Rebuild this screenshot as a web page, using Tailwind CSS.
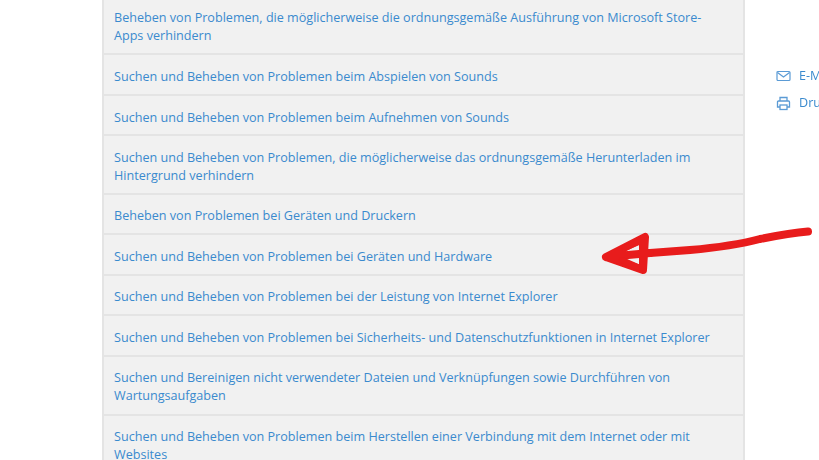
<!DOCTYPE html>
<html lang="de">
<head>
<meta charset="utf-8">
<title>Problembehandlung</title>
<script src="https://cdn.jsdelivr.net/npm/@tailwindcss/browser@4"></script>
</head>
<body class="bg-white overflow-hidden font-['Open_Sans','Noto_Sans',sans-serif]">
<div class="relative w-[819px] h-[460px] overflow-hidden blur-[0.4px]">
  <div class="flex items-start pl-[102px]">
    <!-- Liste -->
    <ul class="w-[643px] -mt-[5px] shrink-0 bg-[#f1f1f1] border-x-2 border-[#e4e4e4] text-[12.6px] leading-[18px] text-[#3a8ace]">
      <li class="h-[60px] pt-[14px] pl-[10px] pr-[30px] border-b-2 border-[#e4e4e4]">Beheben von Problemen, die möglicherweise die ordnungsgemäße Ausführung von Microsoft Store-Apps verhindern</li>
      <li class="h-[41px] pt-[13px] pl-[10px] pr-6 border-b-2 border-[#e4e4e4]">Suchen und Beheben von Problemen beim Abspielen von Sounds</li>
      <li class="h-[40px] pt-[13px] pl-[10px] pr-6 border-b-2 border-[#e4e4e4]">Suchen und Beheben von Problemen beim Aufnehmen von Sounds</li>
      <li class="h-[59px] pt-[13px] pl-[10px] pr-6 border-b-2 border-[#e4e4e4]">Suchen und Beheben von Problemen, die möglicherweise das ordnungsgemäße Herunterladen im Hintergrund verhindern</li>
      <li class="h-[40px] pt-[12px] pl-[10px] pr-6 border-b-2 border-[#e4e4e4]">Beheben von Problemen bei Geräten und Druckern</li>
      <li class="h-[41px] pt-[13px] pl-[10px] pr-6 border-b-2 border-[#e4e4e4]">Suchen und Beheben von Problemen bei Geräten und Hardware</li>
      <li class="h-[40px] pt-[12px] pl-[10px] pr-6 border-b-2 border-[#e4e4e4]">Suchen und Beheben von Problemen bei der Leistung von Internet Explorer</li>
      <li class="h-[41px] pt-[13px] pl-[10px] pr-6 border-b-2 border-[#e4e4e4]">Suchen und Beheben von Problemen bei Sicherheits- und Datenschutzfunktionen in Internet Explorer</li>
      <li class="h-[59px] pt-[12px] pl-[10px] pr-6 border-b-2 border-[#e4e4e4]">Suchen und Bereinigen nicht verwendeter Dateien und Verknüpfungen sowie Durchführen von Wartungsaufgaben</li>
      <li class="h-[59px] pt-[12px] pl-[10px] pr-6">Suchen und Beheben von Problemen beim Herstellen einer Verbindung mit dem Internet oder mit Websites</li>
    </ul>
    <!-- Teilen -->
    <div class="ml-[31px] pt-[67px] shrink-0 flex flex-col gap-[9px] text-[12.6px] leading-[18px] text-[#3a8ace] whitespace-nowrap">
      <div class="flex items-center gap-[8px]">
        <svg width="15" height="12" viewBox="0 0 15 12" fill="none" stroke="#5b9bd5" stroke-width="1.2"><rect x="1" y="1.5" width="13" height="9" rx="1"/><path d="M1.5 2.5 7.5 7l6-4.5"/></svg>
        <span>E-Mail</span>
      </div>
      <div class="flex items-center gap-[8px]">
        <svg width="15" height="15" viewBox="0 0 15 15" fill="none" stroke="#5b9bd5" stroke-width="1.3"><path d="M4 5V1.5h7V5M4 11H1.5V6a1 1 0 0 1 1-1h10a1 1 0 0 1 1 1v5H11"/><rect x="4" y="9" width="7" height="4.5"/></svg>
        <span>Drucken</span>
      </div>
    </div>
  </div>
  <!-- Pfeil -->
  <svg class="absolute left-0 top-0" width="819" height="460" viewBox="0 0 819 460" fill="none" stroke="#e81c1c" stroke-width="8" stroke-linecap="round" stroke-linejoin="round">
    <path d="M808 231.500C790 233 775 236 760 239 745 243 725 247 690 250L650 253"/>
    <path d="M606 257 645 237 643 270 606 257 650 253"/>
    <path d="M625 248 641 241M622 260 640 268 M642 240 642 268" stroke-width="6"/>
  </svg>
</div>
</body>
</html>
